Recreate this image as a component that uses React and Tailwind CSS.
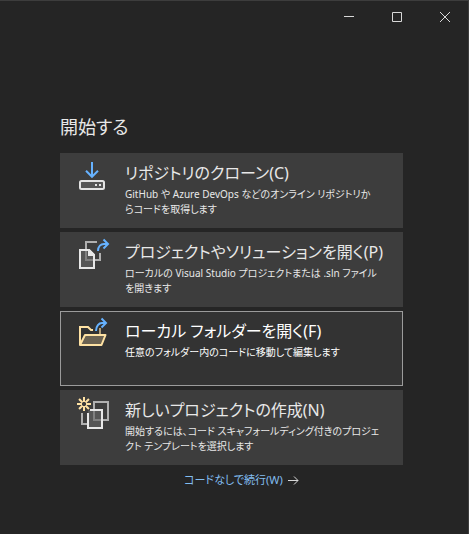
import React from "react";

const BLUE = "#66b2ff";

function CloneIcon() {
  return (
    <svg className="size-9 shrink-0" viewBox="76 158 36 36" fill="none" aria-hidden="true">
      <path d="M92 162v14.5M86 170.8l6 6 6-6" stroke={BLUE} strokeWidth="2" />
      <rect x="80" y="181" width="24" height="8" rx="1.5" stroke="#e4e4e4" strokeWidth="2" fill="#565656" />
      <path d="M95 184h2v2h-2zM99 184h2v2h-2z" fill="#e4e4e4" />
    </svg>
  );
}

function OpenProjectIcon() {
  return (
    <svg className="size-9 shrink-0" viewBox="76 237 36 36" fill="none" aria-hidden="true">
      <path d="M86 249v-7h11M100 253v7h-5" stroke="#b0b0b0" strokeWidth="2" />
      <path d="M80 250h9l5 5v13H80z" fill="#565656" />
      <path d="M86 251v9h8" stroke="#808080" strokeWidth="2" />
      <path d="M80 250h9l5 5v13H80z" stroke="#e8e8e8" strokeWidth="2" />
      <path d="M88 249h1.500l5.500 5.500V256h-7z" fill="#e8e8e8" />
      <path d="M98 251c0-5 3-7 6-7h4M103.500 239.500l4.500 4.500-4.500 4.500" stroke={BLUE} strokeWidth="2" />
    </svg>
  );
}

function FolderIcon() {
  return (
    <svg className="size-9 shrink-0" viewBox="76 316 36 36" fill="none" aria-hidden="true">
      <path d="M100 328v7" stroke="#b39f78" strokeWidth="2" />
      <path d="M80 345v-18h8l3 3h2" stroke="#ffe2a3" strokeWidth="2" />
      <path d="M80 345l5-10h20.500l-4 10z" fill="#6b6251" stroke="#ffe2a3" strokeWidth="2" strokeLinejoin="round" />
      <path d="M96 331c0-5 3-8 6-8h4M101.500 318.500l4.500 4.500-4.500 4.500" stroke={BLUE} strokeWidth="2" />
    </svg>
  );
}

function NewProjectIcon() {
  return (
    <svg className="size-9 shrink-0" viewBox="76 395 36 36" fill="none" aria-hidden="true">
      <path d="M82 413v11h5" stroke="#b0b0b0" strokeWidth="2" />
      <rect x="94" y="402" width="14" height="18" stroke="#b0b0b0" strokeWidth="2" />
      <path d="M89 410h13v18H88V411" fill="#565656" />
      <path d="M94 411v9h8" stroke="#808080" strokeWidth="2" />
      <path d="M90 410h12v18H88v-15" stroke="#e8e8e8" strokeWidth="2" />
      <path
        d="M84 397v5M84 406v5M77 404h5M86 404h5M79.050 399.050l3.500 3.500M85.450 405.450l3.500 3.500M88.950 399.050l-3.500 3.500M82.550 405.450l-3.500 3.500"
        stroke="#ffe2a3"
        strokeWidth="2"
      />
    </svg>
  );
}

const actions = [
  {
    title: "リポジトリのクローン(C)",
    lines: ["GitHub や Azure DevOps などのオンライン リポジトリか", "らコードを取得します"],
    Icon: CloneIcon,
  },
  {
    title: "プロジェクトやソリューションを開く(P)",
    lines: ["ローカルの Visual Studio プロジェクトまたは .sln ファイル", "を開きます"],
    Icon: OpenProjectIcon,
  },
  {
    title: "ローカル フォルダーを開く(F)",
    lines: ["任意のフォルダー内のコードに移動して編集します"],
    Icon: FolderIcon,
    active: true,
  },
  {
    title: "新しいプロジェクトの作成(N)",
    lines: ["開始するには、コード スキャフォールディング付きのプロジェ", "クト テンプレートを選択します"],
    Icon: NewProjectIcon,
  },
];

function ActionCard({ title, lines, Icon, active }) {
  return (
    <button
      type="button"
      className={
        "flex h-[75px] w-full items-start gap-[13px] border pt-1 pl-[15px] text-left " +
        (active ? "border-[#9b9b9b] bg-[#333333] text-white" : "border-[#3d3d3d] bg-[#3d3d3d] text-[#e8e8e8]")
      }
    >
      <Icon />
      <span className="flex flex-col gap-0.5 pt-[3px] whitespace-nowrap">
        <span className="text-[16px] leading-6">{title}</span>
        <span className="text-[10px] leading-[15px]">
          {lines.map((line) => (
            <span key={line} className="block">
              {line}
            </span>
          ))}
        </span>
      </span>
    </button>
  );
}

function WindowControls() {
  return (
    <header className="-mr-px flex h-8 justify-end text-[#d8d8d8]">
      <button type="button" aria-label="最小化" className="flex w-12 items-center justify-center">
        <svg className="size-3" viewBox="0 0 12 12" aria-hidden="true">
          <path d="M1 5.500h10" stroke="currentColor" />
        </svg>
      </button>
      <button type="button" aria-label="最大化" className="flex w-12 items-center justify-center">
        <svg className="size-3" viewBox="0 0 12 12" fill="none" aria-hidden="true">
          <path d="M1.500 1.500h9v9h-9z" stroke="currentColor" />
        </svg>
      </button>
      <button type="button" aria-label="閉じる" className="flex w-12 items-center justify-center">
        <svg className="size-3" viewBox="0 0 12 12" aria-hidden="true">
          <path d="M1 1l10 10M11 1L1 11" stroke="currentColor" />
        </svg>
      </button>
    </header>
  );
}

export default function App() {
  return (
    <div className="min-h-screen border-t border-r border-[#3d3d3d] bg-[#252525] font-['Noto_Sans','Noto_Sans_CJK_JP',sans-serif] [font-feature-settings:'palt']">
      <WindowControls />
      <main className="pt-[82px] pr-[65px] pl-[60px]">
        <h1 className="text-[18px] leading-6 text-[#e8e8e8]">開始する</h1>
        <div className="mt-[14px] flex flex-col gap-1">
          {actions.map((action) => (
            <ActionCard key={action.title} {...action} />
          ))}
        </div>
        <div className="mt-[7px] flex justify-center pl-5">
          <a href="#continue" className="flex items-center gap-1 text-[11px] leading-4 text-[#82bdf0]">
            コードなしで続行(W)
            <svg className="size-3 text-[#d8d8d8]" viewBox="0 0 12 12" fill="none" aria-hidden="true">
              <path d="M1 6.500h10M7 2.500l4 4-4 4" stroke="currentColor" />
            </svg>
          </a>
        </div>
      </main>
    </div>
  );
}
